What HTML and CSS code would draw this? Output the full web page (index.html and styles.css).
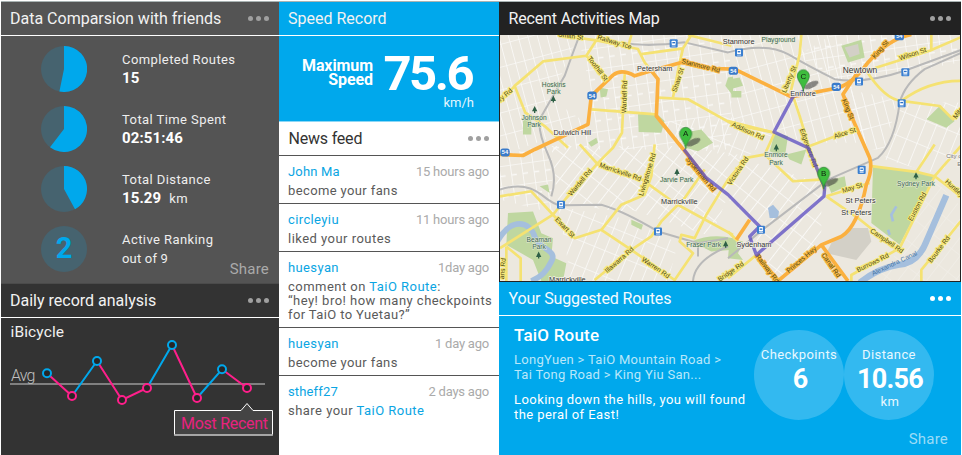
FILE: index.html
```html
<!DOCTYPE html>
<html lang="en">
<head>
<meta charset="utf-8">
<title>Cycling dashboard</title>
<link rel="stylesheet" href="styles.css">
</head>
<body>
<main class="dashboard">
  <div class="col col-left">
    <section class="compare">
      <header class="bar"><h2 class="t-compare">Data Comparsion with friends</h2><span class="dots"><i></i><i></i><i></i></span></header>
      <div class="stats">
        <div class="stat">
          <svg class="pie" viewBox="-23 -23 46 46"><circle r="23" fill="#46636f"/><path d="M0 0V-23A23 23 0 1 1 -4.6 22.5Z" fill="#00a8ec"/></svg>
          <div><p>Completed Routes</p><p><b>15</b></p></div>
        </div>
        <div class="stat">
          <svg class="pie" viewBox="-23 -23 46 46"><circle r="23" fill="#46636f"/><path d="M0 0V-23A23 23 0 1 1 -14 18.2Z" fill="#00a8ec"/></svg>
          <div><p>Total Time Spent</p><p><b>02:51:46</b></p></div>
        </div>
        <div class="stat">
          <svg class="pie" viewBox="-23 -23 46 46"><circle r="23" fill="#46636f"/><path d="M0 0V-23A23 23 0 0 1 11 20.2Z" fill="#00a8ec"/></svg>
          <div><p>Total Distance</p><p><b>15.29</b><span class="unit">km</span></p></div>
        </div>
        <div class="stat">
          <div class="pie rank">2</div>
          <div><p>Active Ranking</p><p class="of">out of 9</p></div>
        </div>
      </div>
      <a class="share">Share</a>
    </section>
    <section class="daily">
      <header class="bar"><h2 class="t-daily">Daily record analysis</h2><span class="dots"><i></i><i></i><i></i></span></header>
      <div class="chart">
        <svg width="278" height="137" viewBox="1 318 278 137">
          <path d="M10 384H265" stroke="#808080" stroke-width="2"/>
          <g stroke-width="2" fill="none">
            <path stroke="#ff1f8b" d="M47 373.3L72 396M97 361L122 400L147 388M172 345L197 398M222 369.3L247 388"/>
            <path stroke="#00a8ec" d="M72 396L97 361M147 388L172 345M197 398L222 369.3"/>
          </g>
          <g fill="#262626" stroke-width="2" stroke="#00a8ec">
            <circle cx="47" cy="373.3" r="4"/><circle cx="97" cy="361" r="4"/><circle cx="172" cy="345" r="4"/><circle cx="222" cy="369.3" r="4"/>
          </g>
          <g fill="#262626" stroke-width="2" stroke="#ff1f8b">
            <circle cx="72" cy="396" r="4"/><circle cx="122" cy="400" r="4"/><circle cx="147" cy="388" r="4"/><circle cx="197" cy="398" r="4"/><circle cx="247" cy="388" r="4"/>
          </g>
          <path d="M174.5 410.5H241L247 403.5L253 410.5H272.5V435H174.5Z" fill="#444" stroke="#fff"/>
          <path d="M174 435H273" stroke="#aaa" stroke-width="1.3"/>
          <text x="10.5" y="336.5" font-size="15.5" fill="#f0f0f0" textLength="53.5">iBicycle</text>
          <text x="11" y="380.5" font-size="16" font-weight="300" fill="#c0c0c0" textLength="24.5">Avg</text>
          <text x="181" y="428.5" font-size="16" fill="#e8227f" textLength="87">Most Recent</text>
        </svg>
      </div>
    </section>
  </div>

  <div class="col col-mid">
    <section class="speed">
      <header class="bar"><h2 class="t-speed">Speed Record</h2></header>
      <div class="speed-body">
        <p class="speed-label">Maximum<br>Speed</p>
        <div class="speed-value"><strong>75.6</strong><span>km/h</span></div>
      </div>
    </section>
    <section class="news">
      <header class="bar"><h2 class="t-news">News feed</h2><span class="dots"><i></i><i></i><i></i></span></header>
      <article><div class="who"><a class="n1">John Ma</a><time>15 hours ago</time></div><p>become your fans</p></article>
      <article><div class="who"><a>circleyiu</a><time>11 hours ago</time></div><p class="wide">liked your routes</p></article>
      <article class="tall"><div class="who"><a>huesyan</a><time>1day ago</time></div><p class="wide">comment on <a>TaiO Route</a>:<br>“hey! bro! how many checkpoints<br><span class="tight">for TaiO to Yuetau?”</span></p></article>
      <article><div class="who"><a>huesyan</a><time>1 day ago</time></div><p>become your fans</p></article>
      <article><div class="who"><a class="n1">stheff27</a><time>2 days ago</time></div><p class="wide">share your <a>TaiO Route</a></p></article>
    </section>
  </div>

  <div class="col col-right">
    <section class="activity">
      <header class="bar"><h2 class="t-map">Recent Activities Map</h2><span class="dots"><i></i><i></i><i></i></span></header>
      <svg class="map" viewBox="6 108 1380 735" preserveAspectRatio="none">
        <defs>
          <pattern id="g1" width="34" height="62" patternUnits="userSpaceOnUse" patternTransform="rotate(-8)"><path d="M0 0H34M0 0V62M0 31H17" stroke="#fff" stroke-width="5" fill="none"/></pattern>
          <pattern id="g2" width="62" height="34" patternUnits="userSpaceOnUse" patternTransform="rotate(-52)"><path d="M0 0H62M0 0V34" stroke="#fff" stroke-width="5" fill="none"/></pattern>
          <pattern id="g3" width="34" height="72" patternUnits="userSpaceOnUse" patternTransform="rotate(22)"><path d="M0 0H34M0 0V72" stroke="#fff" stroke-width="5" fill="none"/></pattern>
          <pattern id="g4" width="28" height="66" patternUnits="userSpaceOnUse" patternTransform="rotate(-15)"><path d="M0 0H28M0 0V66" stroke="#fff" stroke-width="5" fill="none"/></pattern>
          <g id="station"><rect x="-12" y="-12" width="24" height="24" rx="3" fill="#3a7fd0"/><rect x="-6" y="-8" width="12" height="13" rx="2" fill="#fff"/><path d="M-4 -4H4V0H-4Z" fill="#2870c8"/><path d="M-6 8H6" stroke="#fff" stroke-width="2"/></g>
          <path id="tree" d="M0 -11L8 5H2V10H-2V5H-8Z" fill="#2f6046"/>
          <path id="pin" d="M0 0C-2 -22 -18 -30 -18 -47A18 18 0 0 1 18 -47C18 -30 2 -22 0 0Z" fill="#3ebd3e" stroke="#23752a" stroke-width="2"/>
        </defs>
        <rect x="6" y="108" width="1380" height="735" fill="#ece8df"/>
        <g opacity=".75">
          <path d="M6 108H240L160 300L270 375L6 470Z" fill="url(#g4)"/>
          <path d="M240 108H700V450H160L270 375V240Z" fill="url(#g1)"/>
          <path d="M700 108H1000L1130 430H935L700 370Z" fill="url(#g4)"/>
          <path d="M900 170L1000 108H1388V190L1110 240H1010Z" fill="url(#g1)"/>
          <path d="M1040 270L1200 300L1160 450H1100Z" fill="url(#g4)"/>
          <path d="M1210 310H1388V480L1310 520L1160 480Z" fill="url(#g3)"/>
          <path d="M6 470L160 430L165 640L6 600Z" fill="url(#g1)"/>
          <path d="M160 440H560L400 640L180 610Z" fill="url(#g2)"/>
          <path d="M470 370L690 350L830 400L740 480L560 440Z" fill="url(#g3)"/>
          <path d="M560 440L750 470L690 590L640 710L400 630Z" fill="url(#g2)"/>
          <path d="M180 620L400 660L540 730L510 843H220Z" fill="url(#g3)"/>
          <path d="M740 480L970 550L970 735L850 830L770 770L780 680L680 590Z" fill="url(#g2)"/>
          <path d="M1210 750L1310 540L1388 620V843H1100Z" fill="url(#g2)" opacity=".3"/>
        </g>

        <g fill="#bfd7a0">
          <path d="M420 345L475 342L500 365L490 400L422 398Z"/><path d="M562 445L555 400L610 390L645 430L600 455Z"/>
          <path d="M305 265L330 270L325 292L308 295ZM270 430L295 415L300 430L280 442Z"/><path d="M75 365L100 345V405H75Z"/>
          <path d="M690 235L705 232V290L682 260Z"/><path d="M1030 140L1090 122L1100 175L1050 190Z"/><path d="M1285 360L1325 320L1370 365L1345 385Z"/>
          <path d="M695 240L725 235L735 260L705 268ZM700 275H730V295H700Z"/>
          <path d="M830 400L870 410L860 475L815 455ZM865 465L925 450L910 495L875 480Z"/><path d="M985 545L1040 530L1045 560L1000 580Z"/>
          <path d="M30 640L105 635L130 700L165 715L160 770L205 790L195 843H130L105 780L25 735Z"/>
          <path d="M125 560L150 555L155 580ZM400 660L435 675L430 690L400 675Z"/>
          <path d="M580 725Q640 700 705 715V750L640 755Z"/><path d="M695 715L735 725L720 760L735 780L690 775Z"/>
          <path d="M1125 502L1255 517L1310 530L1205 735L1120 670Z"/>
        </g>
        <g fill="#d3d0c7"><path d="M1055 685H1110L1120 725L1075 780L985 760L1000 730Z"/><path d="M1040 145L1080 135L1085 165L1055 175Z"/></g>
        <g fill="none" stroke="#a5bfdd">
          <path d="M-2 725C40 650 95 665 110 710C125 750 180 750 160 785C145 815 130 830 100 843" stroke-width="17"/>
          <path d="M1345 587L1285 725Q1260 790 1200 795Q1140 805 1085 848" stroke-width="19"/>
          <path d="M1195 620L1180 645L1185 665M1170 690L1175 705" stroke-width="8"/>
        </g>
        <path d="M810 625L825 615L843 635L840 655H815Z" fill="#a5bfdd"/>

        <g fill="none" stroke="#b9b9b9" stroke-width="6" stroke-linejoin="round">
          <path d="M6 570Q80 545 130 585T200 617L310 615Q380 635 480 695L600 730L690 715"/>
          <path d="M245 108Q225 160 200 230L125 360Q120 400 150 465T160 590"/>
          <path d="M370 130Q440 145 560 130L690 160Q800 130 870 165Q930 200 1010 240Q1100 255 1220 215L1388 153"/>
          <path d="M690 775L800 685L990 540L1140 475Q1190 430 1205 310Q1220 255 1280 210L1388 162"/>
          <path d="M585 843Q590 780 690 740M600 735V770"/>
        </g>

        <g fill="none" stroke="#f5e272" stroke-width="8" stroke-linejoin="round">
          <path d="M6 310L50 260L135 187L265 170L305 108M50 260L82 340L140 380L210 445M265 170L335 245"/>
          <path d="M180 108L300 125L420 150L440 190L460 215M430 165L555 148L580 108M555 148L545 190L525 295M400 108L390 145"/>
          <path d="M570 108L700 140M380 225L372 400L345 445L300 490L205 595L165 645L6 745M280 330L475 345M480 295L570 300L705 375L830 400"/>
          <path d="M245 435L300 495L425 535L530 610L705 705M470 435L460 530L440 585L370 615L310 690L230 715L165 645L100 575L6 590"/>
          <path d="M310 690L400 750L530 840L585 760L545 725L550 705L590 715L625 645L690 540L745 475L800 465L830 400"/>
          <path d="M290 840L400 750L460 710L490 665L560 595L620 510M800 465L885 545L965 540M25 740L68 775V843M25 740V843"/>
          <path d="M690 695L720 725M690 835L775 765M910 108L905 165L875 290M885 290L905 350L935 450L980 575M690 365L830 400M935 440L1065 390"/>
          <path d="M1105 215Q1160 300 1210 305L1325 320L1365 360L1388 340M1210 305Q1290 245 1388 245M1105 215L1295 155L1388 115M1300 108V150"/>
          <path d="M985 590L1115 550M985 590L1080 655L1205 755M1120 500L1255 517L1310 530L1388 590M1255 517L1310 435M1310 530L1388 440M1310 530L1205 745L1060 825V843M1388 665L1270 810V843"/>
        </g>
        <g fill="none" stroke="#fbb03f" stroke-width="11" stroke-linejoin="round">
          <path d="M6 465L75 468L110 450L270 375L280 290L345 228Q370 208 410 230L460 215L550 190L640 208L710 210L880 293L1010 268Q1060 260 1110 190Q1170 120 1240 106"/>
          <path d="M460 215L480 240L475 350L560 455L630 545"/>
          <path d="M1075 225L1035 285L1060 350L1115 475Q1125 510 1105 555Q1080 680 1030 710L970 735L840 843M970 735L1050 843M775 765L840 840M715 720L755 660"/>
        </g>

        <g class="road amber">
          <text transform="translate(550 192) rotate(14)">Stanmore Rd</text><text transform="translate(563 480) rotate(50)">Sydenham Rd</text>
          <text transform="translate(1131 180) rotate(-49)">King St</text><text transform="translate(1032 302) rotate(68)">King St</text>
          <text transform="translate(872 820) rotate(-40)">Princes Hwy</text><text transform="translate(970 765) rotate(55)">Canal Rd</text><text transform="translate(772 770) rotate(52)">Railway Rd</text>
        </g>
        <g class="road">
          <text transform="translate(180 112) rotate(8)">Smith St</text><text transform="translate(297 120) rotate(17)">Railway Tce</text><text transform="translate(268 178) rotate(53)">Toothill St</text>
          <text transform="translate(535 280) rotate(-72)">Shaw St</text><text transform="translate(384 342) rotate(-88)">Wardell Rd</text>
          <text transform="translate(-55 360) rotate(-40)">Canterbury Rd</text><text transform="translate(220 590) rotate(-50)">Wardell Rd</text><text transform="translate(303 502) rotate(19)">Marrickville Rd</text>
          <text transform="translate(435 590) rotate(-73)">Livingstone Rd</text><text transform="translate(170 660) rotate(46)">Ewart St</text><text transform="translate(328 820) rotate(-41)">Illawarra Rd</text>
          <text transform="translate(430 782) rotate(34)">Warren Rd</text><text transform="translate(698 558) rotate(-56)">Victoria Rd</text>
          <text transform="translate(700 380) rotate(24)">Addison Rd</text><text transform="translate(863 282) rotate(-67)">Liberty St</text><text transform="translate(905 390) rotate(70)">Edgeware Rd</text>
          <text transform="translate(1010 418) rotate(-18)">Alice St</text>
          <text transform="translate(1206 184) rotate(-18)">Wilson St</text><text transform="translate(1375 360) rotate(-55)">Mitc</text><text transform="translate(1035 580) rotate(-17)">May St</text>
          <text transform="translate(1115 696) rotate(34)">Campbell Rd</text><text transform="translate(1242 665) rotate(-62)">Euston Rd</text><text transform="translate(1080 817) rotate(-26)">Burrows Rd</text>
          <text transform="translate(1300 790) rotate(-53)">Bourke Rd</text><text transform="translate(1340 548) rotate(42)">Huntley</text>
          <text transform="translate(665 845) rotate(-34)">Bridge Rd</text><text transform="translate(18 838) rotate(-85)">ans Rd</text>
        </g>
        <text class="water" transform="translate(1125 827) rotate(-25)">Alexandra Canal</text>
        <path d="M558 450L625 535L690 585L785 680L755 710L775 765L978 590L980 565L952 495L930 445L828 398L885 292L918 275" fill="none" stroke="#5a4bc2" stroke-opacity=".75" stroke-width="10" stroke-linejoin="round"/>
        <g class="park">
          <text x="167" y="262">Hoskins</text><text x="167" y="283">Park</text><text x="108" y="363">Johnson</text><text x="108" y="384">Park</text>
          <text x="536" y="548">Jarvie Park</text><text x="123" y="727">Beaman</text><text x="123" y="748">Park</text><text x="617" y="741">Fraser Park</text>
          <text x="834" y="474">Enmore</text><text x="834" y="495">Park</text><text x="1254" y="560">Sydney Park</text><text x="841" y="128">Playground</text>
        </g>
        <g class="place">
          <text x="470" y="215">Petersham</text><text x="223" y="408">Dulwich Hill</text><text x="544" y="612">Marrickville</text><text x="208" y="845">Marrickville</text>
          <text x="722" y="136">Stanmore</text><text x="915" y="290">Enmore</text><text class="big" x="1086" y="222">Newtown</text>
          <text x="1088" y="611">St Peters</text><text x="1075" y="646">St Peters</text><text x="768" y="741">Sydenham</text><text class="small" x="1370" y="477">City of</text><text class="small" x="1388" y="498">Ex</text>
        </g>
        <use href="#tree" x="166" y="300"/><use href="#tree" x="110" y="331"/><use href="#tree" x="537" y="518"/><use href="#tree" x="122" y="766"/><use href="#tree" x="683" y="734"/><use href="#tree" x="835" y="445"/><use href="#tree" x="1254" y="529"/>
        <use href="#station" x="527" y="133"/><use href="#station" x="723" y="160"/><use href="#station" x="1083" y="247"/><use href="#station" x="1222" y="219"/><use href="#station" x="1211" y="312"/><use href="#station" x="189" y="615"/><use href="#station" x="480" y="695"/><use href="#station" x="1091" y="511"/><use href="#station" x="789" y="690"/>
        <g class="shield">
          <rect x="268" y="277" width="28" height="24" rx="8"/><rect x="692" y="203" width="28" height="24" rx="8"/><rect x="1001" y="251" width="28" height="24" rx="8"/><rect x="1190" y="100" width="28" height="24" rx="8"/><rect x="7" y="447" width="28" height="24" rx="8"/>
          <text x="282" y="295">54</text><text x="706" y="221">54</text><text x="1015" y="269">54</text><text x="1204" y="118">54</text><text x="21" y="465">54</text>
        </g>
        <g fill="#333" opacity=".55"><ellipse cx="586" cy="428" rx="23" ry="9" transform="rotate(-25 586 428)"/><ellipse cx="940" cy="257" rx="23" ry="9" transform="rotate(-25 940 257)"/><ellipse cx="998" cy="548" rx="24" ry="9" transform="rotate(-25 998 548)"/></g>
        <use href="#pin" x="563" y="449"/><use href="#pin" x="916" y="277"/><use href="#pin" x="977" y="568"/>
        <g class="letter"><text x="563" y="411">A</text><text x="916" y="239">C</text><text x="977" y="530">B</text></g>
      </svg>
    </section>
    <section class="routes">
      <header class="bar"><h2 class="t-routes">Your Suggested Routes</h2><span class="dots"><i></i><i></i><i></i></span></header>
      <div class="route">
        <div class="route-text">
          <h3>TaiO Route</h3>
          <p class="path">LongYuen &gt; TaiO Mountain Road &gt;<br>Tai Tong Road &gt; King Yiu San...</p>
          <p class="about">Looking down the hills, you will found<br>the peral of East!</p>
        </div>
        <div class="bubble"><span>Checkpoints</span><strong>6</strong></div>
        <div class="bubble"><span>Distance</span><strong>10.56</strong><span class="km">km</span></div>
      </div>
      <a class="share">Share</a>
    </section>
  </div>
</main>
</body>
</html>
```
FILE: styles.css
```css
* { box-sizing: border-box; }
body { margin: 0; background: #fff; font-family: Roboto, "Liberation Sans", sans-serif; }
h2, h3, p { margin: 0; font-weight: 400; }

.dashboard { display: grid; grid-template-columns: 278px 220px 462px; width: 962px; height: 455px; padding: 1px 1px 0; }
.col { display: flex; flex-direction: column; border-top: 1px solid #a9b3b3; }

.bar { display: flex; justify-content: space-between; align-items: center; height: 34px; padding: 0 10px 0 9px; border-bottom: 1px solid #fff; color: #f2f2f2; }
.bar h2 { font-size: 16px; line-height: 32px; white-space: nowrap; }
.bar .t-map, .bar .t-routes { letter-spacing: -.15px; padding-left: .5px; }
.bar .t-news { letter-spacing: -.2px; padding-left: .5px; }
.dots { display: flex; gap: 3px; }
.dots i { width: 5px; height: 5px; border-radius: 50%; background: #a0a0a0; }

.compare { position: relative; height: 281px; background: #545454; }
.stats { padding-top: 2.5px; }
.stat { display: flex; align-items: center; gap: 35px; height: 60px; padding-left: 40px; font-size: 13px; line-height: 19px; letter-spacing: .42px; color: #eee; }
.pie { width: 46px; height: 46px; flex: none; }
.rank { display: grid; place-items: center; border-radius: 50%; background: #46636f; color: #00a8ec; font-size: 29px; font-weight: 700; letter-spacing: 0; }
.stat b { font-size: 15px; font-weight: 700; letter-spacing: .1px; color: #fff; }
.stat .of { letter-spacing: .2px; }
.unit { margin-left: 8px; font-size: 13px; }
.share { position: absolute; right: 10px; bottom: 4px; font-size: 15px; line-height: 20px; letter-spacing: .2px; color: #aaa; }

.daily { flex: 1; background: #333; border-top: 1px solid #4b4b4b; }
.chart svg { display: block; }

.speed { height: 120px; background: #00a8ec; border-bottom: 1px solid #8bd7f6; }
.speed-body { display: flex; justify-content: flex-end; padding: 16px 25px 0 0; color: #fff; }
.speed-label { padding-top: 7px; text-align: right; font-size: 16px; font-weight: 700; line-height: 14px; letter-spacing: -.1px; }
.speed-value { display: flex; flex-direction: column; align-items: flex-end; margin-left: 10.5px; }
.speed-value strong { margin-right: 2px; font-size: 49px; line-height: 44px; font-weight: 700; letter-spacing: -2.5px; }
.speed-value span { font-size: 13px; line-height: 14px; color: #e4f6fe; }

.news { flex: 1; background: #fff; color: #5a5a5a; }
.news .bar { color: #333; border-color: #555; }
.news article { height: 48px; padding: 6px 6px 0 9px; border-bottom: 1px solid #555; }
.news article.tall { height: 76px; }
.news article:last-child { border: 0; }
.news a { color: #0aa5e3; }
.who { display: flex; justify-content: space-between; padding-right: 4px; font-size: 13px; line-height: 19px; letter-spacing: .38px; }
.who .n1 { letter-spacing: .15px; }
.who time { letter-spacing: -.22px; color: #aaa; }
.news p { margin-top: 3px; font-size: 13px; line-height: 14px; letter-spacing: .38px; white-space: nowrap; }
.news p.wide { letter-spacing: .47px; }
.news .tight { letter-spacing: .38px; }

.activity { height: 280px; background: #222; }
.activity .bar { height: 33px; border: 0; }
.map { display: block; width: 460px; height: 246px; margin: 0 0 0 1px; }
.map text { font-family: "Liberation Sans", sans-serif; }
.road { font-size: 20px; fill: #4e4614; stroke: #f8ea7c; stroke-width: 6px; paint-order: stroke; }
.amber { stroke: #fbb944; }
.water { font-size: 20px; fill: #4474a6; }
.park { font-size: 20px; fill: #396650; text-anchor: middle; stroke: #e6ead6; stroke-width: 3px; paint-order: stroke; }
.place { font-size: 22px; fill: #333; text-anchor: middle; stroke: #f4f1ea; stroke-width: 4px; paint-order: stroke; }
.place .big { font-size: 25px; }
.place .small { font-size: 18px; fill: #777; }
.shield { fill: #3a7bca; font-size: 17px; font-weight: 700; text-anchor: middle; }
.shield text { fill: #fff; }
.letter { font-size: 24px; fill: #102010; text-anchor: middle; }

.routes { position: relative; flex: 1; background: #00a8ec; }
.routes .bar { color: #f4fbff; }
.routes .dots i { background: #fff; }
.route { display: flex; padding: 14px 0 0 15px; color: #fff; }
.route-text { width: 239px; flex: none; margin-right: 1px; white-space: nowrap; font-size: 13px; line-height: 15px; }
.route h3 { margin-top: -5px; font-size: 17px; line-height: 20px; font-weight: 500; letter-spacing: .2px; }
.path { margin-top: 7px; letter-spacing: .3px; color: #b9e7fa; }
.about { margin-top: 10px; letter-spacing: .44px; }
.bubble { display: flex; flex-direction: column; align-items: center; flex: none; width: 90px; height: 90px; padding-top: 16px; border-radius: 50%; background: #33b9f0; color: #e8f8ff; font-size: 13px; line-height: 17px; letter-spacing: .4px; white-space: nowrap; }
.bubble strong { padding-left: 2px; font-size: 27px; line-height: 33px; font-weight: 700; letter-spacing: -.8px; color: #fff; }
.bubble .km { padding-left: 2px; line-height: 12px; }
.routes .share { right: 13px; bottom: 6px; color: #9bdcf7; }
```
